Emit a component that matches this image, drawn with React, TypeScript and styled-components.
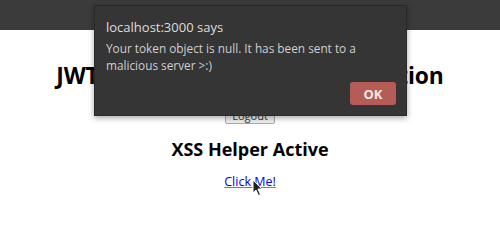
import React from "react";
import styled, { createGlobalStyle } from "styled-components";

const Global = createGlobalStyle`
  html, body { margin: 0; padding: 0; background: #ffffff; }
  body { width: 500px; height: 242px; overflow: hidden; font-family: "Open Sans", "Noto Sans", sans-serif; }
`;

const Screen = styled.div`
  position: relative;
  width: 500px;
  height: 242px;
  display: flex;
  flex-direction: column;
  background: #ffffff;
`;

const ChromeBar = styled.div`
  height: 30px;
  flex: none;
  background: #3b3b3b;
`;

const Page = styled.main`
  flex: 1;
  display: flex;
  flex-direction: column;
  align-items: center;
  color: #000000;
`;

const Title = styled.h1`
  margin: 32px 0 0;
  font-size: 22.8px;
  line-height: 28px;
  font-weight: 700;
  letter-spacing: -0.1px;
  white-space: nowrap;
`;

const LogoutButton = styled.button`
  margin-top: 16px;
  height: 18px;
  padding: 0 6px;
  font: 11px "Open Sans", sans-serif;
  color: #333;
  background: #efefef;
  border: 1px solid #a9a9a9;
  border-radius: 2px;
`;

const SubTitle = styled.h2`
  margin: 13px 0 0;
  font-size: 18px;
  line-height: 24px;
  font-weight: 700;
`;

const HelperLink = styled.a`
  margin-top: 12px;
  font-size: 12.5px;
  line-height: 18px;
  color: #0000ee;
  text-decoration: underline;
  text-decoration-color: #6f6ff5;
`;

const Dialog = styled.div`
  position: absolute;
  left: 94px;
  top: 5px;
  width: 313px;
  height: 111px;
  box-sizing: border-box;
  background: #353535;
  border: 1px solid #2a2a2a;
  box-shadow: 0 2px 6px rgba(0, 0, 0, 0.35);
  padding: 12px 10px 10px 11px;
  display: flex;
  flex-direction: column;
  font-family: "Open Sans", "Noto Sans", sans-serif;
`;

const DialogTitle = styled.div`
  font-size: 13px;
  line-height: 18px;
  color: #dedede;
`;

const DialogMessage = styled.div`
  margin-top: 4px;
  font-size: 11.8px;
  line-height: 17px;
  color: #cfcfcf;
  width: 260px;
`;

const DialogActions = styled.div`
  margin-top: auto;
  display: flex;
  justify-content: flex-end;
`;

const OkButton = styled.button`
  width: 46px;
  height: 23px;
  border: none;
  border-radius: 3px;
  background: #b65c56;
  color: #f4e8e6;
  font: 700 13px "Open Sans", sans-serif;
  padding: 0;
`;

const Cursor = styled.svg`
  position: absolute;
  left: 252px;
  top: 179px;
`;

export default function App() {
  return (
    <>
      <Global />
      <Screen>
        <ChromeBar />
        <Page>
          <Title>JWT Token Storage Demonstration</Title>
          <LogoutButton>Logout</LogoutButton>
          <SubTitle>XSS Helper Active</SubTitle>
          <HelperLink href="#">Click Me!</HelperLink>
        </Page>
        <Dialog>
          <DialogTitle>localhost:3000 says</DialogTitle>
          <DialogMessage>
            Your token object is null. It has been sent to a malicious server &gt;:)
          </DialogMessage>
          <DialogActions>
            <OkButton>OK</OkButton>
          </DialogActions>
        </Dialog>
        <Cursor width="12" height="18" viewBox="0 0 12 18">
          <path d="M1 1 L1 14 L4 11 L6.5 16.5 L8.5 15.5 L6 10 L10 10 Z" fill="#222" stroke="#fff" strokeWidth="1" strokeLinejoin="round" />
        </Cursor>
      </Screen>
    </>
  );
}
